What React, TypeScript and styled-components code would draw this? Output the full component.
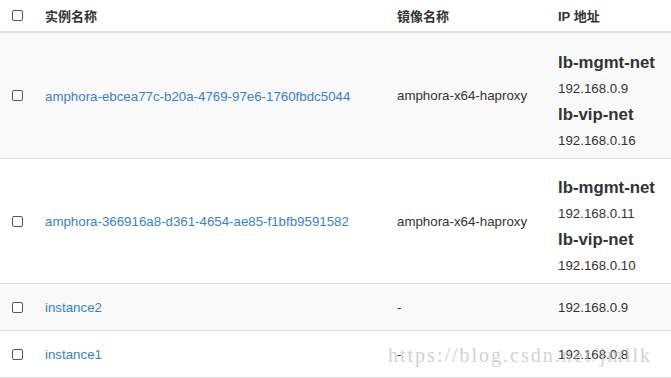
import React from "react";
import styled, { createGlobalStyle } from "styled-components";

const Global = createGlobalStyle`
  html, body { margin: 0; padding: 0; background: #fff; }
  body { font-family: "Liberation Sans", Arial, "Noto Sans CJK SC", sans-serif; color: #333; }
`;

const Table = styled.div`
  width: 671px;
  display: flex;
  flex-direction: column;
`;

const Row = styled.div<{ $h: number; $bg?: string; $head?: boolean }>`
  display: grid;
  grid-template-columns: 45px 352px 161px 1fr;
  align-items: center;
  height: ${(p) => p.$h}px;
  background: ${(p) => p.$bg || "#fff"};
  border-bottom: ${(p) => (p.$head ? "2px solid #ddd" : "1px solid #ddd")};
`;

const CheckCell = styled.div`
  display: flex;
  align-items: center;
  padding-left: 12px;
`;

const Box = styled.span`
  width: 9px;
  height: 9px;
  border: 1px solid #555;
  border-radius: 2px;
  background: #fff;
  display: inline-block;
`;

const HeadText = styled.div`
  font-size: 13px;
  font-weight: bold;
  color: #333;
`;

const Link = styled.a`
  font-size: 13.3px;
  color: #3a7fc4;
  text-decoration: none;
`;

const Plain = styled.div`
  font-size: 13.3px;
  color: #333;
`;

const IpBlock = styled.div`
  display: flex;
  flex-direction: column;
  padding-top: 12px;
`;

const NetName = styled.div`
  font-size: 16.8px;
  font-weight: bold;
  color: #333;
  line-height: 25px;
`;

const Ip = styled.div`
  font-size: 13.3px;
  line-height: 27px;
  color: #333;
`;

const Watermark = styled.div`
  position: absolute;
  left: 388px;
  top: 343px;
  line-height: 24px;
  font-family: "Liberation Serif", "DejaVu Serif", serif;
  font-size: 20px;
  color: rgba(195, 195, 195, 0.75);
  letter-spacing: 2px;
  pointer-events: none;
  white-space: nowrap;
`;

const Wrap = styled.div`
  position: relative;
  overflow: hidden;
`;

type Net = { name: string; ip: string };
type Item = { name: string; image: string; nets?: Net[]; ip?: string };

const rows: Item[] = [
  {
    name: "amphora-ebcea77c-b20a-4769-97e6-1760fbdc5044",
    image: "amphora-x64-haproxy",
    nets: [
      { name: "lb-mgmt-net", ip: "192.168.0.9" },
      { name: "lb-vip-net", ip: "192.168.0.16" },
    ],
  },
  {
    name: "amphora-366916a8-d361-4654-ae85-f1bfb9591582",
    image: "amphora-x64-haproxy",
    nets: [
      { name: "lb-mgmt-net", ip: "192.168.0.11" },
      { name: "lb-vip-net", ip: "192.168.0.10" },
    ],
  },
  { name: "instance2", image: "-", ip: "192.168.0.9" },
  { name: "instance1", image: "-", ip: "192.168.0.8" },
];

export default function App() {
  return (
    <Wrap>
      <Global />
      <Table>
        <Row $h={31} $head>
          <CheckCell><Box /></CheckCell>
          <HeadText>实例名称</HeadText>
          <HeadText>镜像名称</HeadText>
          <HeadText>IP 地址</HeadText>
        </Row>
        {rows.map((r, i) => (
          <Row key={i} $h={r.nets ? (i === 0 ? 125 : 124) : 46} $bg={i % 2 === 0 ? "#f9f9f9" : "#fff"}>
            <CheckCell><Box /></CheckCell>
            <div><Link href="#">{r.name}</Link></div>
            <Plain>{r.image}</Plain>
            {r.nets ? (
              <IpBlock>
                {r.nets.map((n) => (
                  <React.Fragment key={n.name}>
                    <NetName>{n.name}</NetName>
                    <Ip>{n.ip}</Ip>
                  </React.Fragment>
                ))}
              </IpBlock>
            ) : (
              <Plain>{r.ip}</Plain>
            )}
          </Row>
        ))}
      </Table>
      <Watermark>https://blog.csdn.net/jmilk</Watermark>
    </Wrap>
  );
}
